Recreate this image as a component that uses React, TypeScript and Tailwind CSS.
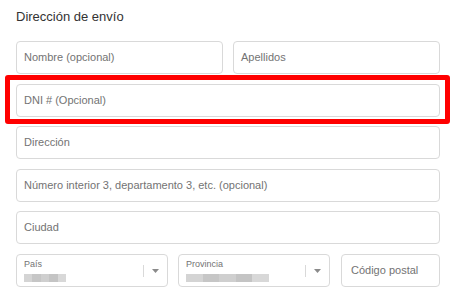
const fieldBase =
    'h-[33px] border border-[#d9d9d9] rounded-[4px] bg-white flex items-center text-[11px] text-[#737373]'

const Field = ({ label, className = '' }: { label: string; className?: string }) => (
    <div className={`${fieldBase} px-[7px] ${className}`}>{label}</div>
)

const SelectField = ({ label, blurWidth }: { label: string; blurWidth: string }) => (
    <div className="h-[33px] flex-1 border border-[#d9d9d9] rounded-[4px] bg-white flex items-center">
        <div className="flex-1 pl-[7px] flex flex-col justify-center">
            <span className="text-[9px] leading-[11px] text-[#737373]">{label}</span>
            {/* blurred value, as in the screenshot */}
            <div className={`mt-[4px] h-[8px] ${blurWidth} flex blur-[0.6px]`}>
                <div className="flex-1 bg-[#d4d4d4]" />
                <div className="flex-1 bg-[#c6c6c6]" />
                <div className="flex-1 bg-[#cfcfcf]" />
                <div className="flex-1 bg-[#c4c4c4]" />
                <div className="flex-1 bg-[#d8d8d8]" />
            </div>
        </div>
        <div className="w-px h-[12px] bg-[#d9d9d9] mt-[2px]" />
        <div className="w-[23px] flex justify-center mt-[2px]">
            <svg width="7" height="4" viewBox="0 0 7 4">
                <path d="M0 0h7L3.5 4z" fill="#8a8a8a" />
            </svg>
        </div>
    </div>
)

export default function App() {
    return (
        <div
            className="w-[456px] h-[295px] bg-white px-4 overflow-hidden"
            style={{ fontFamily: '"Liberation Sans", Arial, sans-serif' }}
        >
            <h2 className="pt-[9px] text-[13px] leading-[16px] text-[#333333] font-normal">Dirección de envío</h2>

            <div className="mt-[16px] flex flex-col gap-[9.5px]">
                <div className="flex gap-[10px]">
                    <Field label="Nombre (opcional)" className="flex-1" />
                    <Field label="Apellidos" className="flex-1" />
                </div>

                <div className="relative">
                    <Field label="DNI # (Opcional)" />
                    {/* highlight frame */}
                    <div className="absolute -left-[11px] -right-[10px] -top-[9px] -bottom-[7px] border-[5px] border-[#ff0000] rounded-[3px] pointer-events-none" />
                </div>

                <Field label="Dirección" />
                <Field label="Número interior 3, departamento 3, etc. (opcional)" />
                <Field label="Ciudad" />

                <div className="flex gap-[10px]">
                    <SelectField label="País" blurWidth="w-[42px]" />
                    <SelectField label="Provincia" blurWidth="w-[83px]" />
                    <div className={`${fieldBase} w-[99px] px-[9px] ml-px`}>Código postal</div>
                </div>
            </div>
        </div>
    )
}
